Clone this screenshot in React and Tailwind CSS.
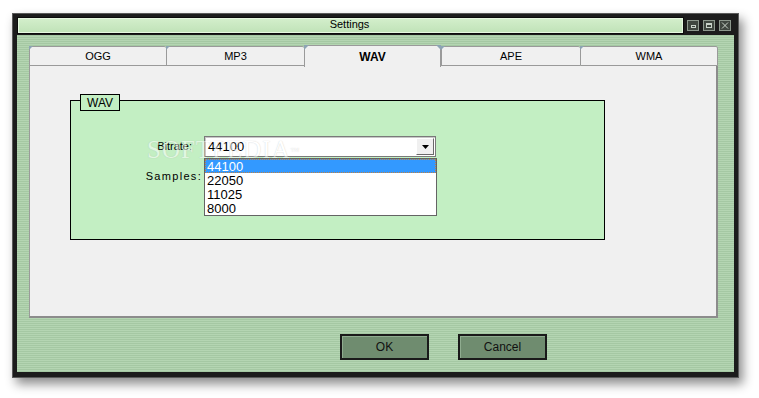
export default function App() {
  const tabs = ["OGG", "MP3", "WAV", "APE", "WMA"];
  const widths = ["w-[137px]", "w-[138px]", "w-[137px]", "w-[139px]", "w-[138px]"];
  const items = ["44100", "22050", "11025", "8000"];
  return (
    <div className="w-[759px] h-[398px] bg-white pt-[13px] pl-[12px] font-['Liberation_Sans',Arial,sans-serif] text-[11px] text-black">
      <div className="w-[727px] h-[365px] bg-[#1c1c1c] border border-[#5a5a5a] shadow-[4px_6px_10px_rgba(0,0,0,0.45)] flex flex-col px-[4px] pt-[2px] pb-[5px]">
        {/* title row */}
        <div className="h-[18px] flex items-center">
          <div className="flex-1 h-[17px] border border-[#0c0c0c] bg-[linear-gradient(#d4efcc,#bfe2b7)] shadow-[inset_0_0_0_1px_#e6f7e0] flex items-center justify-center leading-none">
            <span className="mr-[2px] -mt-[1px]">Settings</span>
          </div>
          <div className="flex items-center gap-[4px] ml-[3px] mr-[3px]">
            <div className="w-[12px] h-[11px] bg-[#3f463f] border border-[#8d988d] flex items-end justify-center pb-[2px]">
              <div className="w-[5px] h-[3px] border border-[#c9d2c9]" />
            </div>
            <div className="w-[12px] h-[11px] bg-[#3f463f] border border-[#8d988d] flex items-center justify-center">
              <div className="w-[6px] h-[5px] border border-[#c9d2c9] border-t-2" />
            </div>
            <div className="w-[12px] h-[11px] bg-[#3f463f] border border-[#8d988d] flex items-center justify-center">
              <svg width="8" height="7" viewBox="0 0 8 7">
                <path d="M1 0.5 L7 6.5 M7 0.5 L1 6.5" stroke="#c9d2c9" strokeWidth="1" />
              </svg>
            </div>
          </div>
        </div>
        <div className="h-[1px]" />
        {/* green body */}
        <div className="flex-1 bg-[repeating-linear-gradient(#a5c8a3_0px,#a5c8a3_1px,#b4d5b2_1px,#b4d5b2_2px)] pl-[12px] pr-[16px] pt-[11px] flex flex-col">
          {/* tabs */}
          <div className="flex h-[20px] items-end relative z-10">
            {tabs.map((t, i) =>
              t === "WAV" ? (
                <div
                  key={t}
                  className={`${widths[i]} h-[22px] -mb-[1px] bg-[#f0f0f0] border-l border-t border-r border-[#9a9a9a] rounded-t-[2px] flex items-center justify-center font-bold text-[12px] relative`}
                >
                  <span className="mt-[1px]">WAV</span>
                  <span className="absolute -left-[1px] -top-[1px] w-0 h-0 border-t-[5px] border-t-[#8da4b4] border-r-[5px] border-r-transparent" />
                  <span className="absolute -right-[1px] -top-[1px] w-0 h-0 border-t-[5px] border-t-[#8da4b4] border-l-[5px] border-l-transparent" />
                </div>
              ) : (
                <div
                  key={t}
                  className={`${widths[i]} h-[20px] bg-[#f0f0f0] border-l border-t border-b border-[#9a9a9a] ${i === 4 ? "border-r" : ""} rounded-t-[2px] flex items-center justify-center relative`}
                >
                  <span>{t}</span>
                  <span className="absolute -left-[1px] -top-[1px] w-0 h-0 border-t-[4px] border-t-[#8da4b4] border-r-[4px] border-r-transparent" />
                </div>
              )
            )}
          </div>
          {/* panel */}
          <div className="h-[252px] bg-[#f0f0f0] border-l border-[#9a9a9a] border-r-2 border-b-2 border-r-[#8c8c8c] border-b-[#8c8c8c] pl-[40px] pt-[34px]">
            <div className="relative w-[535px] h-[140px] bg-[#c3efc3] border border-black">
              <div className="absolute left-[9px] -top-[7px] w-[40px] h-[17px] bg-[#c3efc3] border border-black flex items-center justify-center text-[12px] leading-none">
                WAV
              </div>
              <div className="flex flex-col pt-[35px]">
                <div className="flex items-center h-[21px]">
                  <div className="w-[121px] text-right">Bitrate:</div>
                  <div className="ml-[12px] relative w-[232px] h-[21px] bg-white border border-[#7a7a7a] shadow-[inset_1px_1px_0_#c8c8c8] flex items-center">
                    <span className="pl-[3px] text-[13px] leading-none">44100</span>
                    <div className="ml-auto mr-[1px] w-[18px] h-[17px] bg-[#f0f0f0] border border-t-white border-l-white border-r-[#6a6a6a] border-b-[#6a6a6a] flex items-center justify-center">
                      <svg width="7" height="4" viewBox="0 0 7 4">
                        <path d="M0 0 H7 L3.5 4 Z" fill="#000" />
                      </svg>
                    </div>
                    <div className="absolute left-[-1px] top-[21px] w-[233px] h-[58px] bg-white border border-[#646464] flex flex-col text-[13px] leading-none z-20">
                      {items.map((it, k) => (
                        <div
                          key={it}
                          className={`h-[14px] flex items-center pl-[2px] ${k === 0 ? "bg-[#3399ff] text-white outline-1 outline-dotted outline-[#c08040] -outline-offset-1" : ""}`}
                        >
                          {it}
                        </div>
                      ))}
                    </div>
                  </div>
                </div>
                <div className="flex items-center h-[20px] mt-[9px]">
                  <div className="w-[131px] text-right tracking-[1.3px]">Samples:</div>
                </div>
              </div>
              {/* watermark */}
              <div className="absolute left-[76px] top-[36px] z-30 font-['Liberation_Serif',serif] text-[25px] tracking-[1px] text-white opacity-50 leading-none pointer-events-none [text-shadow:0_0_1px_#9a9a9a]">
                SOFTPEDIA<sup className="text-[9px]">™</sup>
              </div>
            </div>
          </div>
          {/* buttons */}
          <div className="flex gap-[29px] mt-[16px] pl-[311px]">
            <button className="w-[89px] h-[26px] bg-[#6f8c6f] border-2 border-[#1a1a1a] shadow-[inset_1px_1px_0_#8fac8f] text-[12px] text-[#111]">
              OK
            </button>
            <button className="w-[89px] h-[26px] bg-[#6f8c6f] border-2 border-[#1a1a1a] shadow-[inset_1px_1px_0_#8fac8f] text-[12px] text-[#111]">
              Cancel
            </button>
          </div>
        </div>
      </div>
    </div>
  );
}
